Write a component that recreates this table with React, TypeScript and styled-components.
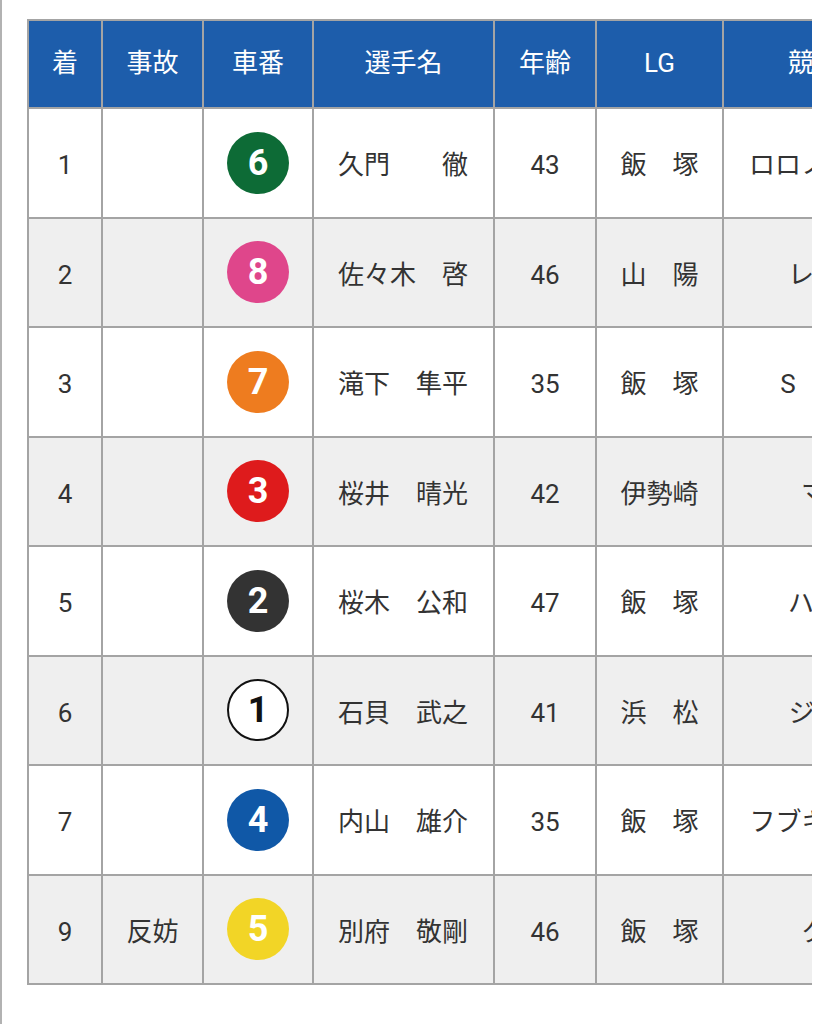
import styled, { createGlobalStyle } from "styled-components"

interface Racer {
    rank: string
    accident: string
    car: number
    name: string
    age: number
    lg: string
    machine: string
}

const racers: Racer[] = [
    { rank: "1", accident: "", car: 6, name: "久門　　徹", age: 43, lg: "飯　塚", machine: "ロロノア・ゾロ" },
    { rank: "2", accident: "", car: 8, name: "佐々木　啓", age: 46, lg: "山　陽", machine: "レイザー" },
    { rank: "3", accident: "", car: 7, name: "滝下　隼平", age: 35, lg: "飯　塚", machine: "S　ボルト" },
    { rank: "4", accident: "", car: 3, name: "桜井　晴光", age: 42, lg: "伊勢崎", machine: "マッハ" },
    { rank: "5", accident: "", car: 2, name: "桜木　公和", age: 47, lg: "飯　塚", machine: "ハヤブサ" },
    { rank: "6", accident: "", car: 1, name: "石貝　武之", age: 41, lg: "浜　松", machine: "ジャガー" },
    { rank: "7", accident: "", car: 4, name: "内山　雄介", age: 35, lg: "飯　塚", machine: "フブキマックス" },
    { rank: "9", accident: "反妨", car: 5, name: "別府　敬剛", age: 46, lg: "飯　塚", machine: "クロス" },
]

// car number -> badge colour
const carColors: Record<number, string> = {
    1: "#ffffff",
    2: "#333333",
    3: "#de1b1c",
    4: "#1058a7",
    5: "#f2d526",
    6: "#0d6b36",
    7: "#ee7c1f",
    8: "#df468b",
}

const columns = [74, 101, 110, 181, 102, 127, 234]

export default function App() {
    return (
        <>
            <GlobalStyle />
            <Page>
                <ScrollArea>
                    <ResultTable>
                        <colgroup>
                            {columns.map((w, i) => <col key={i} style={{ width: w }} />)}
                        </colgroup>
                        <thead>
                            <tr>
                                <HeadCell>着</HeadCell>
                                <HeadCell>事故</HeadCell>
                                <HeadCell>車番</HeadCell>
                                <HeadCell>選手名</HeadCell>
                                <HeadCell>年齢</HeadCell>
                                <HeadCell>LG</HeadCell>
                                <HeadCell>競走車名</HeadCell>
                            </tr>
                        </thead>
                        <tbody>
                            {racers.map((r) => (
                                <Row key={r.rank}>
                                    <Cell>{r.rank}</Cell>
                                    <Cell>{r.accident}</Cell>
                                    <BadgeCell>
                                        <CarBadge $bg={carColors[r.car]} $outlined={r.car === 1}>
                                            {r.car}
                                        </CarBadge>
                                    </BadgeCell>
                                    <NameCell>{r.name}</NameCell>
                                    <Cell>{r.age}</Cell>
                                    <Cell>{r.lg}</Cell>
                                    <Cell>{r.machine}</Cell>
                                </Row>
                            ))}
                        </tbody>
                    </ResultTable>
                </ScrollArea>
            </Page>
        </>
    )
}

const GlobalStyle = createGlobalStyle`
    html, body {
        margin: 0;
        padding: 0;
        background: #ffffff;
    }

    body {
        font-family: Roboto, "Noto Sans CJK JP", sans-serif;
        color: #333333;
    }
`

const Page = styled.div`
    min-height: 100vh;
    box-sizing: border-box;
    border-left: 2px solid #b2b2b2;
    padding: 19px 26px 0 25px;
`

const ScrollArea = styled.div`
    overflow-x: auto;
    scrollbar-width: none;

    &::-webkit-scrollbar {
        display: none;
    }
`

const ResultTable = styled.table`
    table-layout: fixed;
    width: ${columns.reduce((a, b) => a + b, 0)}px;
    border-collapse: collapse;
    font-size: 26px;
    line-height: 1.2;
`

const HeadCell = styled.th`
    height: 86px;
    padding: 0;
    background: #1d5dab;
    color: #ffffff;
    font-weight: 400;
    text-align: center;
    vertical-align: middle;
    white-space: nowrap;
    border: 2px solid #a4a4a4;
`

const Row = styled.tr`
    height: 109.5px;
    background: #ffffff;

    &:nth-child(even) {
        background: #efefef;
    }
`

// text sits a little below the cell's middle, as in the app
const Cell = styled.td`
    padding: 6px 0 0;
    text-align: center;
    vertical-align: middle;
    white-space: nowrap;
    border: 2px solid #a4a4a4;
`

const BadgeCell = styled(Cell)`
    padding: 0;
`

const NameCell = styled(Cell)`
    text-align: left;
    padding-left: 24px;
`

const CarBadge = styled.span<{ $bg: string; $outlined?: boolean }>`
    display: inline-flex;
    align-items: center;
    justify-content: center;
    width: 62px;
    height: 62px;
    box-sizing: border-box;
    border-radius: 50%;
    vertical-align: middle;
    background: ${(p) => p.$bg};
    border: ${(p) => (p.$outlined ? "2px solid #111111" : "none")};
    color: ${(p) => (p.$outlined ? "#111111" : "#ffffff")};
    font-family: Roboto, sans-serif;
    font-weight: 700;
    font-size: 36px;
    line-height: 1;
`
